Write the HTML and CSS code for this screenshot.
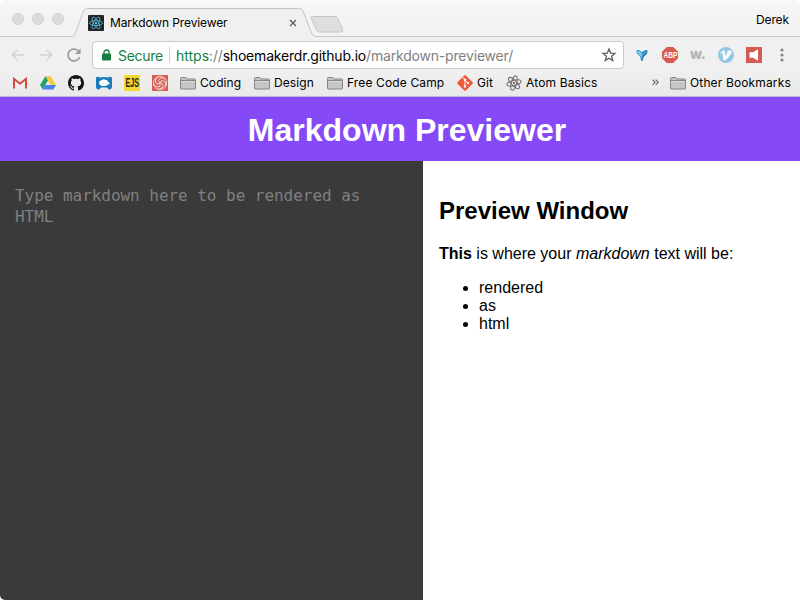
FILE: index.html
```html
<!DOCTYPE html>
<html lang="en">
<head>
<meta charset="utf-8">
<title>Markdown Previewer</title>
<link rel="stylesheet" href="styles.css">
</head>
<body>
<svg class="defs" width="0" height="0">
  <symbol id="folder" viewBox="0 0 16 16">
    <path d="M.5 13.500v-10q0-1 1-1h4q.7 0 1 .8l.3.7h7.700q1 0 1 1v8.500q0 .5-.5.5H1q-.5 0-.5-.5z" fill="#c5c5c5" stroke="#858585"/>
    <path d="M1 5.500h14" stroke="#858585"/><path d="M1 6.500h14" stroke="#dedede"/>
  </symbol>
</svg>
<div class="window">
  <div class="tabstrip">
    <div class="lights"><i></i><i></i><i></i></div>
    <div class="tab">
      <svg class="tab-shape" width="244" height="29" viewBox="0 0 244 29"><path d="M0 29v-.5q2-.3 3-2.500L11.500 3q1-2.500 4-2.500H227q3 0 4 2.500L240 26q1.200 2.500 4 2.500v.5z" fill="#f0f0f0"/><path d="M0 28.500q2-.3 3-2.500L11.500 3q1-2.500 4-2.500H227q3 0 4 2.500L240 26q1.200 2.500 4 2.500" fill="none" stroke="#c4c4c4"/></svg>
      <svg class="icon" viewBox="0 0 16 16"><rect width="16" height="16" rx="1" fill="#222629"/><g fill="none" stroke="#5ab8d2" stroke-width=".8"><ellipse cx="8" cy="8" rx="6.500" ry="2.500"/><ellipse cx="8" cy="8" rx="6.500" ry="2.500" transform="rotate(60 8 8)"/><ellipse cx="8" cy="8" rx="6.500" ry="2.500" transform="rotate(120 8 8)"/></g><circle cx="8" cy="8" r="1.200" fill="#61cbe8"/></svg>
      <span class="tab-title">Markdown Previewer</span>
      <svg class="close" width="8" height="8" viewBox="0 0 8 8"><path d="M1 1l6 6M7 1L1 7" stroke="#5a5a5a" stroke-width="1.300"/></svg>
    </div>
    <svg class="newtab" width="34" height="17" viewBox="0 0 34 17"><path d="M2.500.5H25q2 0 2.700 1.500l5 12q.6 2-1.200 2H9.500q-2 0-2.800-1.700L1 2.200Q.4.500 2.500.5z" fill="#dedede" stroke="#c6c6c6"/></svg>
    <span class="user">Derek</span>
  </div>
  <div class="toolbar">
    <svg class="nav" viewBox="0 0 16 16"><path d="M14.500 8H2.500M7.500 2.800L2.300 8l5.200 5.200" fill="none" stroke="#d2d2d2" stroke-width="1.300"/></svg>
    <svg class="nav" viewBox="0 0 16 16"><path d="M1.500 8h12M8.500 2.800L13.700 8l-5.200 5.200" fill="none" stroke="#d2d2d2" stroke-width="1.300"/></svg>
    <svg class="nav" viewBox="0 0 16 16"><path d="M13.700 10A6 6 0 1 1 12.700 4.200" fill="none" stroke="#999" stroke-width="1.600"/><path d="M14.600 1.500v5.600H9z" fill="#999"/></svg>
    <div class="omnibox">
      <svg class="lock" width="9" height="12" viewBox="0 0 9 12"><path d="M2 5.500V3.300a2.500 2.300 0 0 1 5 0v2.200" fill="none" stroke="#168043" stroke-width="1.300"/><rect y="4.500" width="9" height="7" rx=".8" fill="#168043"/></svg>
      <span class="secure">Secure</span>
      <i class="divider"></i>
      <span class="url"><b>https</b><s>://</s>shoemakerdr.github.io<s>/markdown-previewer/</s></span>
      <svg class="star" width="16" height="16" viewBox="0 0 16 16"><path d="M8 2l1.600 4.100 4.400.3-3.400 2.800 1.100 4.300L8 11.200l-3.700 2.300 1.100-4.300L2 6.400l4.400-.3z" fill="none" stroke="#5c5c5c" stroke-width="1.300"/></svg>
    </div>
    <div class="extensions">
      <svg viewBox="0 0 16 16"><path d="M1.500 2.500Q4 1 6 2l2 1 2-1q2-1 4.500.5.800 3-1.300 5.500L10.500 10.500 9.500 15h-3L5.500 10.500 2.800 8Q.7 5.500 1.500 2.500z" fill="#fff"/><path d="M2.300 3.200Q4.500 2.300 6 3.500L8 5l2-1.500q1.500-1.200 3.700-.3.400 2.600-1.500 4.400L9.700 10 9 14H7l-.7-4-2.500-2.400Q1.900 5.800 2.300 3.200z" fill="#3f92c8"/><path d="M3 3.700q1.800-.4 3 .8l2 2v4L4.500 7.300Q3 5.700 3 3.700z" fill="#7fcaea"/><path d="M8.500 10l4.300-4.800q0 1.700-1.700 3L9 10.500z" fill="#245f98"/></svg>
      <div class="abp"><span>ABP</span></div>
      <span class="wdot">w.</span>
      <svg viewBox="0 0 16 16"><circle cx="8" cy="8" r="8" fill="#93c8e5"/><path d="M2.300 5.800L5.500 3.200q1.300-.4 1.500 1l.3 4.500L9.900 5.500 8.500 5.200q1.500-2.300 4-2 2 .5 1 2.800Q11.500 10 7.500 13.200q-2 1-2.400-1L4.500 6l-1.500.7z" fill="#f5fafc"/></svg>
      <svg viewBox="0 0 16 16"><rect width="16" height="16" fill="#d25b52"/><path d="M3.500 5.300H7l5-3v11.400l-5-3H3.500z" fill="#fff"/></svg>
      <svg viewBox="0 0 16 16"><g fill="#858585"><circle cx="8" cy="3" r="1.600"/><circle cx="8" cy="8" r="1.600"/><circle cx="8" cy="13" r="1.600"/></g></svg>
    </div>
  </div>
  <div class="bookmarks">
    <svg class="icon" viewBox="0 0 16 16"><path d="M1 2.500h14v11H1z" fill="#f1eeee"/><path d="M2 13.500V3.800l6 5 6-5v9.700" fill="none" stroke="#d14b40" stroke-width="2"/></svg>
    <svg class="icon" viewBox="0 0 16 16"><path d="M5.300 1.200h5.400L16 10h-5.300z" fill="#f9c83b"/><path d="M5.300 1.200L8 5.600 2.700 14.500 0 10z" fill="#29a269"/><path d="M5.300 10H16l-2.700 4.500H2.700z" fill="#4683ed"/></svg>
    <svg class="icon" viewBox="0 0 16 16"><path fill="#151515" d="M8 0C3.580 0 0 3.580 0 8c0 3.540 2.290 6.530 5.470 7.590.4.070.55-.17.55-.38 0-.19-.01-.82-.01-1.490-2.010.37-2.530-.49-2.690-.94-.09-.23-.48-.94-.82-1.130-.28-.15-.68-.52-.01-.53.63-.01 1.080.58 1.230.82.72 1.210 1.870.87 2.330.66.07-.52.28-.87.51-1.070-1.780-.2-3.640-.89-3.640-3.950 0-.87.31-1.590.82-2.150-.08-.2-.36-1.020.08-2.120 0 0 .67-.21 2.200.82.64-.18 1.320-.27 2-.27s1.360.09 2 .27c1.530-1.040 2.200-.82 2.200-.82.44 1.100.16 1.920.08 2.120.51.56.82 1.270.82 2.150 0 3.070-1.870 3.750-3.650 3.950.29.25.54.73.54 1.480 0 1.070-.01 1.930-.01 2.200 0 .21.15.46.55.38A8.010 8.010 0 0 0 16 8c0-4.420-3.580-8-8-8z"/></svg>
    <svg class="icon" viewBox="0 0 16 16"><path d="M0 2.500q2-1.500 4 0 4-1 8 0 2-1.500 4 0v10q-1 2.500-3 2l-2-2H5l-2 2q-2 .5-3-2z" fill="#1a7db9"/><path d="M3 7.800Q3.200 5.500 5.500 5.300q2-2 4-.5 2.200 0 2.500 2 1.800.3 1.300 2-.7 1.500-2.300 1-1 1.700-3 1-1.700 1-2.800-.4Q3 10.300 3 7.800z" fill="#fff"/></svg>
    <div class="ejs"><span>EJS</span></div>
    <svg class="icon" viewBox="0 0 16 16"><rect width="16" height="16" fill="#d65f56"/><g fill="none" stroke="#f4cfcb" stroke-width="1"><circle cx="8" cy="8" r="6.600"/><path d="M8 8Q5 5.500 8 3.200q3.500-1.200 5.500 1.300"/><path d="M8 8Q5 5.500 8 3.200q3.500-1.200 5.500 1.300" transform="rotate(72 8 8)"/><path d="M8 8Q5 5.500 8 3.200q3.500-1.200 5.500 1.300" transform="rotate(144 8 8)"/><path d="M8 8Q5 5.500 8 3.200q3.500-1.200 5.500 1.300" transform="rotate(216 8 8)"/><path d="M8 8Q5 5.500 8 3.200q3.500-1.200 5.500 1.300" transform="rotate(288 8 8)"/></g></svg>
    <div class="mark coding"><svg class="icon"><use href="#folder"/></svg><span>Coding</span></div>
    <div class="mark design"><svg class="icon"><use href="#folder"/></svg><span>Design</span></div>
    <div class="mark camp"><svg class="icon"><use href="#folder"/></svg><span>Free Code Camp</span></div>
    <div class="mark git"><svg class="icon" viewBox="0 0 16 16"><path d="M7.200.5q.8-.8 1.600 0l6.700 6.700q.8.800 0 1.600l-6.700 6.700q-.8.800-1.600 0L.5 8.800q-.8-.8 0-1.600z" fill="#ee593a"/><path d="M5.500 2.200L8 4.700v7M8 5l3 3" fill="none" stroke="#fff"/><g fill="#fff"><circle cx="8" cy="4.800" r="1.200"/><circle cx="8" cy="11.500" r="1.200"/><circle cx="11" cy="8" r="1.200"/></g></svg><span>Git</span></div>
    <div class="mark atom"><svg class="icon" viewBox="0 0 16 16"><g fill="none" stroke="#7a7070" stroke-width="1.100"><ellipse cx="8" cy="8" rx="7.300" ry="2.600" transform="rotate(-15 8 8)"/><ellipse cx="8" cy="8" rx="7.300" ry="2.600" transform="rotate(45 8 8)"/><ellipse cx="8" cy="8" rx="7.300" ry="2.600" transform="rotate(105 8 8)"/></g><circle cx="8" cy="8" r="1.200" fill="#7a7070"/></svg><span>Atom Basics</span></div>
    <svg class="more" width="7" height="7" viewBox="0 0 7 7"><path d="M.6.700l2.400 2.600L.6 6M3.700.700l2.400 2.600L3.700 6" fill="none" stroke="#606060" stroke-width="1.100"/></svg>
    <div class="mark other"><svg class="icon"><use href="#folder"/></svg><span>Other Bookmarks</span></div>
  </div>
  <header class="banner"><h1>Markdown Previewer</h1></header>
  <main class="panes">
    <div class="editor">Type markdown here to be rendered as HTML</div>
    <section class="preview">
      <h2>Preview Window</h2>
      <p><strong>This</strong> is where your <em>markdown</em> text will be:</p>
      <ul><li>rendered</li><li>as</li><li>html</li></ul>
    </section>
  </main>
</div>
</body>
</html>
```
FILE: styles.css
```css
* { box-sizing: border-box; }
html { background: #fff; }
body { margin: 0; font-family: "Liberation Sans", Arial, sans-serif; color: #000; }
svg { display: block; flex: none; }
.defs { position: absolute; }
.window { width: 800px; height: 600px; display: flex; flex-direction: column; overflow: hidden; border-radius: 5px; }

.tabstrip, .toolbar, .bookmarks { font-family: Inter, sans-serif; white-space: nowrap; flex: none; }
.tabstrip { height: 37px; display: flex; background: linear-gradient(#f8f8f8, #f3f3f3 15px); border-bottom: 1px solid #cacaca; }
.lights { display: flex; gap: 8px; padding: 13px 0 0 12px; width: 72px; }
.lights i { width: 12px; height: 12px; border-radius: 50%; background: #dcdcdc; border: 1px solid #d0d0d0; }
.tab { position: relative; width: 244px; height: 37px; padding: 8px 0 0 16px; display: flex; align-items: center; }
.tab-shape { position: absolute; left: 0; top: 8px; }
.tab .icon, .tab-title, .close { position: relative; }
.icon { width: 16px; height: 16px; }
.tab-title { font-size: 12px; letter-spacing: -0.11px; margin-left: 6px; width: 179px; line-height: 16px; }
.newtab { margin: 16px 0 0 -6px; }
.user { margin-left: auto; padding: 12px 11px 0 0; font-size: 12px; letter-spacing: -0.1px; line-height: 16px; }

.toolbar { height: 33px; padding: 3px 10px 0; display: flex; align-items: center; background: #f0f0f0; }
.nav { width: 16px; height: 16px; margin-right: 12px; }
.nav:nth-child(3) { margin-right: 10px; }
.omnibox { width: 532px; height: 28px; border: 1px solid #cacaca; border-radius: 4px; background: #fff; display: flex; align-items: center; padding: 0 6px 0 9px; font-size: 14px; line-height: 20px; }
.omnibox span { position: relative; top: 1px; }
.lock { margin-right: 7px; }
.secure { color: #168043; width: 51px; letter-spacing: -0.3px; }
.divider { width: 1px; height: 16px; background: #d0d0d0; margin-right: 6px; }
.url { letter-spacing: -0.19px; }
.url b { font-weight: 400; color: #168043; letter-spacing: 0; }
.url s { text-decoration: none; color: #808080; }
.star { margin-left: auto; }
.extensions { display: flex; gap: 12px; margin-left: 10px; }
.extensions svg { width: 16px; height: 16px; }
.abp { width: 16px; height: 16px; background: #d95a50; color: #fff; display: flex; justify-content: center; clip-path: polygon(30% 0, 70% 0, 100% 30%, 100% 70%, 70% 100%, 30% 100%, 0 70%, 0 30%); }
.abp span { font: bold 9px/16px "Liberation Sans", sans-serif; transform: scaleX(.73); }
.wdot { width: 16px; font-weight: 800; font-size: 14px; line-height: 14px; letter-spacing: -0.3px; color: #adb2b5; }

.bookmarks { height: 27px; padding: 0 9px 1px 12px; display: flex; align-items: center; gap: 12px; background: linear-gradient(#f0f0f0, #e9e9e9); border-bottom: 1px solid #c2b4e0; font-size: 12px; line-height: 16px; }
.ejs { width: 16px; height: 16px; background: #f5d638; color: #272516; display: flex; justify-content: center; }
.ejs span { font: bold 13px/16px "Liberation Sans", sans-serif; transform: scaleX(.56); }
.mark { display: flex; gap: 4px; }
.coding { width: 62px; letter-spacing: 0.1px; }
.design { width: 61px; letter-spacing: 0.1px; }
.camp { width: 118px; letter-spacing: 0.13px; }
.git { width: 37px; letter-spacing: 0.1px; }
.atom { width: 93px; letter-spacing: 0.15px; }
.more { margin-left: auto; }
.other { width: 121px; margin-left: -1px; letter-spacing: 0.14px; }

.banner { height: 64px; flex: none; background: #8549f7; display: flex; justify-content: center; align-items: center; }
.banner h1 { margin: 2px 0 0 14px; color: #fff; font-size: 32px; line-height: 36px; }
.panes { flex: 1; display: flex; }
.editor { width: 423px; background: #3a3a3a; color: #808080; padding: 24px 15px; font: 16px/21px "DejaVu Sans Mono", monospace; letter-spacing: -0.04px; }
.preview { flex: 1; background: #fff; padding: 16px; font-size: 16px; line-height: 18px; }
.preview h2 { margin: 20px 0; font-size: 24px; line-height: 28px; }
.preview p { margin: 0 0 16px; }
.preview ul { margin: 0; padding-left: 40px; }
```
